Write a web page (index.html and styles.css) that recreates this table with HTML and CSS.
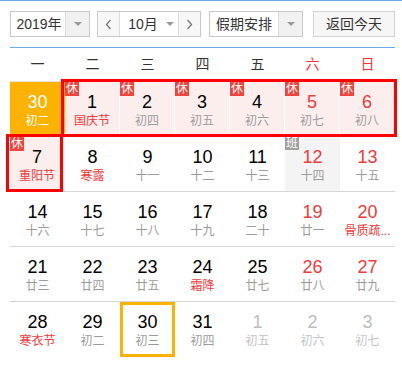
FILE: index.html
```html
<!DOCTYPE html>
<html lang="zh-CN">
<head>
<meta charset="utf-8">
<title>万年历</title>
<link rel="stylesheet" href="styles.css">
</head>
<body>
<div class="cal">
  <div class="toolbar">
    <div class="sel sel-year">
      <span class="sel-text">2019年</span>
      <span class="sel-arrow"><i class="tri"></i></span>
    </div>
    <div class="sel sel-month">
      <span class="nav"><svg width="7" height="11" viewBox="0 0 7 11"><polyline points="5.5,1 1.5,5.5 5.5,10" fill="none" stroke="#777" stroke-width="1.3"/></svg></span>
      <span class="month-mid">10月<i class="tri"></i></span>
      <span class="nav"><svg width="7" height="11" viewBox="0 0 7 11"><polyline points="1.5,1 5.5,5.5 1.5,10" fill="none" stroke="#777" stroke-width="1.3"/></svg></span>
    </div>
    <div class="sel sel-holiday">
      <span class="sel-text">假期安排</span>
      <span class="sel-arrow"><i class="tri"></i></span>
    </div>
    <div class="btn-today">返回今天</div>
  </div>

  <div class="weekhead">
    <span>一</span><span>二</span><span>三</span><span>四</span><span>五</span><span class="we">六</span><span class="we">日</span>
  </div>

  <div class="days">
    <div class="row">
      <div class="cell selected"><div class="num">30</div><div class="lunar">初二</div></div>
      <div class="cell rest"><b class="tag">休</b><div class="num">1</div><div class="lunar fest">国庆节</div></div>
      <div class="cell rest"><b class="tag">休</b><div class="num">2</div><div class="lunar">初四</div></div>
      <div class="cell rest"><b class="tag">休</b><div class="num">3</div><div class="lunar">初五</div></div>
      <div class="cell rest"><b class="tag">休</b><div class="num">4</div><div class="lunar">初六</div></div>
      <div class="cell rest"><b class="tag">休</b><div class="num red">5</div><div class="lunar">初七</div></div>
      <div class="cell rest"><b class="tag">休</b><div class="num red">6</div><div class="lunar">初八</div></div>
    </div>
    <div class="row">
      <div class="cell rest"><b class="tag">休</b><div class="num">7</div><div class="lunar fest">重阳节</div></div>
      <div class="cell"><div class="num">8</div><div class="lunar fest">寒露</div></div>
      <div class="cell"><div class="num">9</div><div class="lunar">十一</div></div>
      <div class="cell"><div class="num">10</div><div class="lunar">十二</div></div>
      <div class="cell"><div class="num">11</div><div class="lunar">十三</div></div>
      <div class="cell work"><b class="tag tag-work">班</b><div class="num red">12</div><div class="lunar">十四</div></div>
      <div class="cell"><div class="num red">13</div><div class="lunar">十五</div></div>
    </div>
    <div class="row">
      <div class="cell"><div class="num">14</div><div class="lunar">十六</div></div>
      <div class="cell"><div class="num">15</div><div class="lunar">十七</div></div>
      <div class="cell"><div class="num">16</div><div class="lunar">十八</div></div>
      <div class="cell"><div class="num">17</div><div class="lunar">十九</div></div>
      <div class="cell"><div class="num">18</div><div class="lunar">二十</div></div>
      <div class="cell"><div class="num red">19</div><div class="lunar">廿一</div></div>
      <div class="cell"><div class="num red">20</div><div class="lunar fest" title="骨质疏松日">骨质疏...</div></div>
    </div>
    <div class="row">
      <div class="cell"><div class="num">21</div><div class="lunar">廿三</div></div>
      <div class="cell"><div class="num">22</div><div class="lunar">廿四</div></div>
      <div class="cell"><div class="num">23</div><div class="lunar">廿五</div></div>
      <div class="cell"><div class="num">24</div><div class="lunar fest">霜降</div></div>
      <div class="cell"><div class="num">25</div><div class="lunar">廿七</div></div>
      <div class="cell"><div class="num red">26</div><div class="lunar">廿八</div></div>
      <div class="cell"><div class="num red">27</div><div class="lunar">廿九</div></div>
    </div>
    <div class="row last">
      <div class="cell"><div class="num">28</div><div class="lunar fest">寒衣节</div></div>
      <div class="cell"><div class="num">29</div><div class="lunar">初二</div></div>
      <div class="cell today"><div class="num">30</div><div class="lunar">初三</div></div>
      <div class="cell"><div class="num">31</div><div class="lunar">初四</div></div>
      <div class="cell other"><div class="num">1</div><div class="lunar">初五</div></div>
      <div class="cell other"><div class="num">2</div><div class="lunar">初六</div></div>
      <div class="cell other"><div class="num">3</div><div class="lunar">初七</div></div>
    </div>

    <div class="hbox hbox-a"></div>
    <div class="hbox hbox-b"></div>
  </div>
</div>
</body>
</html>
```

FILE: styles.css
```css
* { box-sizing: border-box; }

body {
  margin: 0;
  background: #fff;
  color: #333;
  font-family: "Liberation Sans", "Noto Sans CJK SC", sans-serif;
}

.cal {
  border-top: 1px solid #6aaef0;
  padding: 10px 7px 0 10px;
}

/* toolbar */
.toolbar {
  display: flex;
  height: 26px;
}

.sel {
  display: flex;
  height: 26px;
  border: 1px solid #c9c9c9;
  font-size: 14px;
  line-height: 24px;
  color: #333;
  background: #fff;
}

.sel-text {
  flex: 1;
  text-align: center;
}

.sel-arrow {
  width: 24px;
  display: flex;
  align-items: center;
  justify-content: center;
  background: #f1f1f1;
  border-left: 1px solid #dcdcdc;
}

.tri {
  display: inline-block;
  width: 0;
  height: 0;
  border-left: 4px solid transparent;
  border-right: 4px solid transparent;
  border-top: 4px solid #9a9a9a;
}

.sel-year { width: 80px; }
.sel-year .sel-text { padding-left: 2px; }

.sel-month {
  width: 104px;
  margin-left: 7px;
}

.nav {
  width: 21px;
  display: flex;
  align-items: center;
  justify-content: center;
  background: #f7f7f7;
}

.month-mid {
  width: 60px;
  display: flex;
  align-items: center;
  justify-content: center;
  gap: 8px;
  border-left: 1px solid #dcdcdc;
  border-right: 1px solid #dcdcdc;
  padding-left: 4px;
}

.sel-holiday {
  width: 94px;
  margin-left: 8px;
}

.btn-today {
  width: 82px;
  height: 26px;
  margin-left: 10px;
  border: 1px solid #d3d3d3;
  background: #f6f6f6;
  font-size: 14px;
  line-height: 24px;
  text-align: center;
  color: #333;
}

/* week header */
.weekhead {
  display: grid;
  grid-template-columns: repeat(7, 55px);
  margin-top: 10px;
  border-top: 1px solid #6aaef0;
  border-bottom: 1px solid #e2e2e2;
  height: 35px;
  font-size: 14px;
  line-height: 33px;
  text-align: center;
  color: #333;
}

.weekhead .we { color: #f33; }

/* days */
.days {
  position: relative;
}

.row {
  display: grid;
  grid-template-columns: repeat(7, 55px);
  height: 55px;
  border-bottom: 1px solid #d6d6d6;
}

.row.last { border-bottom: none; }

.cell {
  position: relative;
  padding-top: 9px;
  text-align: center;
}

.num {
  font-size: 18px;
  line-height: 22px;
  color: #000;
}

.lunar {
  font-size: 12px;
  line-height: 16px;
  color: #9c9c9c;
  white-space: nowrap;
}

.num.red,
.lunar.fest { color: #f03a3a; }

.rest {
  background: #fdeeee;
  border-right: 1px solid #fff;
}

.work { background: #f4f4f4; }

.tag {
  position: absolute;
  left: 0;
  top: 0;
  width: 14px;
  height: 14px;
  background: #f2433d;
  color: #fff;
  font-size: 12px;
  font-weight: normal;
  line-height: 14px;
  text-align: center;
}

.tag-work {
  top: -1px;
  background: #a0a0a0;
}

.selected { background: #fcb300; }
.selected .num,
.selected .lunar { color: #fff; }

.today { box-shadow: inset 0 0 0 3px #fcb300; }

.other .num { color: #bdbdbd; }
.other .lunar { color: #c4c4c4; }

/* holiday outline overlays */
.hbox {
  position: absolute;
  border: 3px solid #f00;
}

.hbox-a {
  left: 51px;
  top: -3px;
  width: 336px;
  height: 58px;
}

.hbox-b {
  left: -4px;
  top: 52px;
  width: 57px;
  height: 58px;
}
```
